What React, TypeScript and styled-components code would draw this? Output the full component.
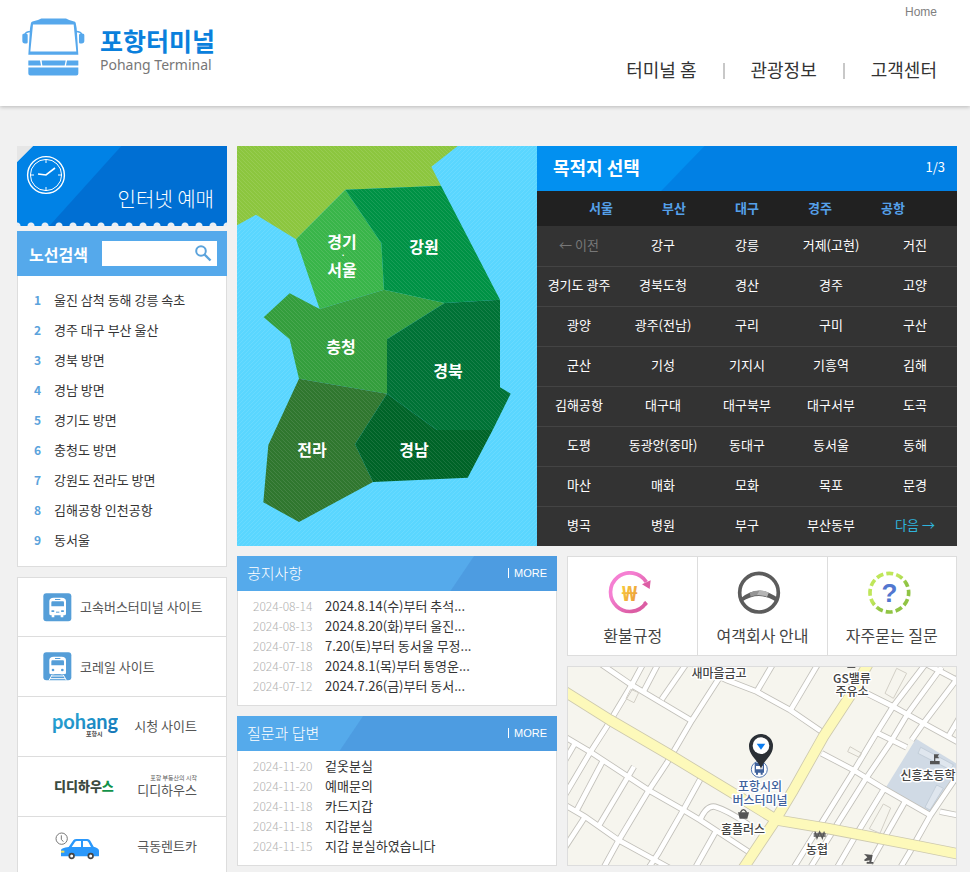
import React from "react";
import styled, { createGlobalStyle } from "styled-components";

const GlobalStyle = createGlobalStyle`
  *, *::before, *::after { box-sizing: border-box; }
  html { scrollbar-width: none; }
  body {
    margin: 0;
    background: #f1f1f1;
    color: #333;
    font-family: "Noto Sans CJK KR", "Noto Sans", sans-serif;
    font-size: 13px;
    line-height: 20px;
  }
  ul, ol { list-style: none; margin: 0; padding: 0; }
  h2 { margin: 0; }
  a { color: inherit; text-decoration: none; }
  button { font: inherit; color: inherit; background: none; border: 0; padding: 0; cursor: pointer; }
  svg { display: block; flex: none; }
`;

/* ---------- header ---------- */

const Header = styled.header`
  display: flex;
  justify-content: space-between;
  height: 106px;
  padding: 0 33px 0 22px;
  background: #fff;
  box-shadow: 0 1px 4px rgba(0, 0, 0, 0.24);
`;

const Brand = styled.a`
  display: flex;
  align-items: flex-start;
  gap: 15px;
  padding-top: 18px;
`;

const BrandText = styled.span`
  display: flex;
  flex-direction: column;
  padding-top: 7px;
`;

const BrandName = styled.strong`
  color: #0a80dc;
  font-size: 25px;
  line-height: 30px;
`;

const BrandSub = styled.span`
  color: #777;
  font-family: "Noto Sans", sans-serif;
  font-size: 14px;
  line-height: 20px;
`;

const HeaderRight = styled.div`
  display: flex;
  flex-direction: column;
  align-items: flex-end;
  gap: 35px;
  padding-top: 2px;
`;

const HomeLink = styled.a`
  color: #808080;
  font-family: "Liberation Sans", sans-serif;
  font-size: 12px;
`;

const MainNav = styled.nav`
  display: flex;
  align-items: center;
  font-size: 18px;
  line-height: 24px;

  a + a::before {
    content: "";
    display: inline-block;
    width: 2px;
    height: 16px;
    margin: 0 26px;
    background: #c8c8c8;
    vertical-align: -2px;
  }
`;

/* ---------- page grid ---------- */

const Page = styled.main`
  display: grid;
  grid-template-columns: 210px minmax(0, 1fr);
  gap: 10px;
  padding: 40px 13px 0 17px;
`;

const Content = styled.div`
  display: flex;
  flex-direction: column;
  gap: 10px;
`;

const Booking = styled.section`
  display: grid;
  grid-template-columns: 300px minmax(0, 1fr);
`;

const Lower = styled.div`
  display: grid;
  grid-template-columns: 320px minmax(0, 1fr);
  gap: 10px;
`;

const Stack = styled.div`
  display: flex;
  flex-direction: column;
  gap: 10px;
`;

/* ---------- sidebar ---------- */

const Ticket = styled.a`
  display: flex;
  justify-content: space-between;
  height: 80px;
  padding: 9px 13px 0 9px;
  color: #fff;
  font-size: 20px;
  font-weight: 300;
  line-height: 30px;
  background:
    radial-gradient(circle at 7px 4px, #e8eef4 3px, transparent 4px) -7px 100% / 14px 4px repeat-x,
    linear-gradient(135deg, #e6e6e6 11px, transparent 12px),
    linear-gradient(132deg, #0082e6 77px, #006fd3 78px);

  span { align-self: flex-end; padding-bottom: 12px; }
`;

const SearchBar = styled.form`
  display: flex;
  align-items: center;
  gap: 14px;
  height: 45px;
  margin-top: 5px;
  padding: 0 10px 0 12px;
  background: #55a9eb;

  label { flex: none; color: #fff; font-size: 16px; font-weight: 700; }
`;

const SearchBox = styled.div`
  display: flex;
  align-items: center;
  flex: 1;
  min-width: 0;
  height: 25px;
  padding-right: 5px;
  background: #fff;

  input { flex: 1; min-width: 0; height: 25px; padding: 0 6px; border: 0; outline: 0; background: transparent; font: inherit; }
`;

const RouteList = styled.ol`
  padding: 9px 0 11px;
  background: #fff;
  border: 1px solid #ddd;
  border-top: 0;

  a { display: flex; align-items: center; height: 30px; padding-left: 16px; }
  b { width: 20px; color: #5ba3dc; font-size: 12px; }
`;

const PartnerList = styled.ul`
  margin-top: 10px;
  background: #fff;
  border: 1px solid #ddd;
  border-bottom: 0;

  li:first-child > a { height: 59px; }
`;

const Partner = styled.a<{ $spread?: boolean }>`
  display: flex;
  align-items: center;
  justify-content: ${(p) => (p.$spread ? "space-between" : "flex-start")};
  gap: 8px;
  height: 60px;
  padding: ${(p) => (p.$spread ? "0 29px 2px 34px" : "0 0 0 25px")};
  border-bottom: 1px solid #ddd;
  color: #555;
`;

const PartnerName = styled.span`
  display: flex;
  flex-direction: column;
  align-items: flex-end;
  line-height: 16px;

  small { font-size: 6px; line-height: 8px; }
`;

/* ---------- destinations ---------- */

const Destinations = styled.div`
  background: #333;
  color: #fff;
`;

const DestHeader = styled.div`
  display: flex;
  align-items: center;
  justify-content: space-between;
  height: 45px;
  padding: 0 12px 3px 16px;
  background: linear-gradient(134deg, #0290f0 120px, #0180e4 121px);

  h2 { font-size: 18px; line-height: 26px; }
`;

const CityTabs = styled.div`
  display: flex;
  justify-content: center;
  height: 35px;
  padding-bottom: 2px;
  background: #212121;

  button { width: 73px; color: #55a0ea; font-weight: 700; }
`;

const StopGrid = styled.div`
  display: grid;
  grid-template-columns: repeat(5, minmax(0, 1fr));
`;

const Stop = styled.button<{ $tone?: "muted" | "accent" }>`
  height: 40px;
  padding-bottom: 3px;
  border-top: 1px solid #444;
  color: ${(p) => (p.$tone === "muted" ? "#777" : p.$tone === "accent" ? "#2fb4dc" : "#fff")};
  white-space: nowrap;

  &:nth-child(-n + 5) { border-top-color: #333; }
`;

/* ---------- boards ---------- */

const Board = styled.section`
  height: 150px;
  background: #fff;
  border: 1px solid #ddd;
  border-top: 0;
`;

const BoardHeader = styled.div<{ $cut: number }>`
  display: flex;
  align-items: center;
  justify-content: space-between;
  height: 35px;
  margin: 0 -1px;
  padding: 0 10px 2px;
  color: #fff;
  background: linear-gradient(124deg, #55aaeb ${(p) => p.$cut}px, #4d9ce1 ${(p) => p.$cut + 1}px);

  h2 { font-size: 15px; font-weight: 300; }
  a { padding-left: 5px; border-left: 1px solid #fff; font-family: "Liberation Sans", sans-serif; font-size: 11px; line-height: 10px; }
`;

const PostList = styled.ul`
  padding: 5px 0 9px 15px;

  li { display: flex; height: 20px; }
  time { width: 72px; color: #b0b0b0; font-size: 12px; font-weight: 300; }
`;

/* ---------- info cards ---------- */

const InfoCards = styled.nav`
  display: grid;
  grid-template-columns: repeat(3, minmax(0, 1fr));
  height: 100px;
  background: #fff;
  border: 1px solid #ddd;

  a {
    display: flex;
    flex-direction: column;
    align-items: center;
    gap: 8px;
    padding-top: 14px;
    color: #444;
    font-size: 16px;
    line-height: 24px;
  }
  a + a { border-left: 1px solid #ddd; }
  svg { margin-right: 6px; }
`;

const MapFrame = styled.div`
  height: 200px;
  border: 1px solid #ddd;

  svg { width: 100%; height: 100%; }
`;

/* ---------- drawings ---------- */

const BusLogo = () => (
  <svg width="63" height="58" viewBox="68 56 189 173" aria-hidden="true">
    <g fill="#56a8ec">
      <path fillRule="evenodd" d="M95 70 Q97 66 102 65 Q118 62 126 57 H200 Q208 62 222 65 Q228 66 229 70 L232 86 L237 166 H87 L92 86Z M101 75 L93 156 H231 L223 75Z" />
      <path d="M69 107 q0-4 4-4 h8 q4 0 4 4 v21 q0 4-4 4 h-4 q-8 0-8-8z M255 107 q0-4-4-4 h-8 q-4 0-4 4 v21 q0 4 4 4 h4 q8 0 8-8z" />
      <path d="M87 183 H122 L125 198 H87Z M127 183 H199 L196 198 H129Z M203 183 H237 V198 H200Z M87 204 H237 V222 q0 6-6 6 H93 q-6 0-6-6z" />
    </g>
    <path d="M76 106 Q79 96 94 96 M248 106 Q245 96 230 96" fill="none" stroke="#56a8ec" strokeWidth="5" />
  </svg>
);

const ClockIcon = () => (
  <svg width="40" height="40" viewBox="0 0 40 40" fill="none" stroke="#fff" aria-hidden="true">
    <circle cx="20" cy="20" r="18.4" strokeWidth="1.4" />
    <circle cx="20" cy="20" r="15.6" strokeWidth="1" />
    <path d="M20 5v3M20 32v3M5 20h3M32 20h3" strokeWidth="1" />
    <path d="M12 19l8 1 9-7" strokeWidth="1.6" />
  </svg>
);

const SearchIcon = () => (
  <svg width="17" height="17" viewBox="0 0 17 17" fill="none" stroke="#5ba3dc" aria-hidden="true">
    <circle cx="6" cy="6" r="4.8" strokeWidth="2" />
    <path d="M9.5 9.5l6 6" strokeWidth="2.4" />
  </svg>
);

const VehicleIcon = ({ rail }: { rail?: boolean }) => (
  <svg width="29" height="29" viewBox="0 0 87 87" aria-hidden="true">
    <rect x="1" y="1" width="84" height="84" rx="9" fill="#559ed8" />
    <path fill="#fff" fillRule="evenodd" d="M19 25 q0-11 13-11 h24 q13 0 13 11 v37 q0 5-5 5 h-3 v6 h-8 v-6 H34 v6 h-8 v-6 h-2 q-5 0-5-5z M28 25 q-3 0-3 4 v11 h38 V29 q0-4-3-4z M36 18 v3 h16 v-3z" />
    {rail ? (
      <g>
        <circle cx="30" cy="54" r="4" fill="#559ed8" />
        <circle cx="58" cy="54" r="4" fill="#559ed8" />
        <path d="M19 67 h50 v8 H19z" fill="#559ed8" />
        <path d="M27 69 L18 85 M61 69 L70 85 M26 72 H62 M21 80 H67" stroke="#fff" strokeWidth="3" fill="none" />
      </g>
    ) : (
      <g fill="#559ed8">
        <rect x="25" y="52" width="9" height="5" rx="2" />
        <rect x="54" y="52" width="9" height="5" rx="2" />
        <rect x="39" y="56" width="10" height="3" />
      </g>
    )}
  </svg>
);

const PohangLogo = () => (
  <svg width="66" height="28" viewBox="0 0 66 28" aria-label="pohang 포항시">
    <defs>
      <linearGradient id="pohang" x1="0" y1="0" x2="1" y2="1">
        <stop offset="0" stopColor="#2fb3dd" />
        <stop offset="1" stopColor="#1473b5" />
      </linearGradient>
    </defs>
    <text x="0" y="17" fontFamily="Lato, sans-serif" fontWeight="700" fontSize="20" fill="url(#pohang)">pohang</text>
    <text x="34" y="24" fontSize="6" fontWeight="700" fill="#444" stroke="#fff" strokeWidth="2" paintOrder="stroke">포항시</text>
  </svg>
);

const DidiLogo = () => (
  <svg width="64" height="20" viewBox="0 0 64 20" aria-label="디디하우스">
    <text x="2" y="15" fontSize="13" fontWeight="900" fill="#3b4a40">디디하우<tspan fill="#13924a">스</tspan></text>
  </svg>
);

const CarLogo = () => (
  <svg width="49" height="28" viewBox="156 818 147 84" aria-hidden="true">
    <circle cx="185" cy="838" r="17" fill="#fff" stroke="#777" strokeWidth="3" />
    <path d="M184 828 V840 L190 847" fill="none" stroke="#777" strokeWidth="3" />
    <path fill="#2a98fb" fillRule="evenodd" d="M183 872 Q184 866 206 863 L220 843 Q223 839 230 839 H262 Q268 839 271 844 L281 862 Q297 866 297 874 V889 Q297 891 293 891 H183Z M215 863 H243 V845 H231 Q227 845 225 848Z M249 863 H273 L265 848 Q263 845 260 845 H249Z" />
    <path d="M183 874 h10 v6 h-10z" fill="#f3dd58" />
    {[215, 272].map((x) => (
      <circle key={x} cx={x} cy="890" r="7" fill="#fff" stroke="#444" strokeWidth="5" />
    ))}
  </svg>
);

const RefundIcon = () => (
  <svg width="44" height="44" viewBox="142 64 132 132" aria-hidden="true">
    <defs>
      <linearGradient id="pink" x1="0" y1="0" x2="1" y2="1">
        <stop offset="0.3" stopColor="#f57fd2" />
        <stop offset="0.8" stopColor="#dc5da4" />
      </linearGradient>
      <linearGradient id="gold" x1="0" y1="0" x2="1" y2="1">
        <stop offset="0" stopColor="#fbd33c" />
        <stop offset="1" stopColor="#e8923c" />
      </linearGradient>
    </defs>
    <path d="M257 97 A58 58 0 1 0 255 161" fill="none" stroke="url(#pink)" strokeWidth="11" />
    <path d="M244 104 L270 92 L267 118Z M248 158 L254 154 L262 163 L256 168Z" fill="#dc5da4" />
    <text x="207" y="153" textAnchor="middle" fontFamily="Noto Sans, sans-serif" fontSize="62" fontWeight="800" fill="url(#gold)">₩</text>
  </svg>
);

const WheelIcon = () => (
  <svg width="44" height="44" viewBox="532 64 132 132" aria-hidden="true">
    <path d="M541 147 Q598 100 657 147 L650 156 Q598 122 546 156Z" fill="#5c5c5c" />
    <path d="M570 129 Q598 116 627 129 L622 141 Q598 133 573 141Z" fill="#949494" />
    <path d="M600 122 Q614 123 627 129 L622 141 Q606 135 592 136Z" fill="#b5b5b5" />
    <circle cx="598" cy="129" r="58" fill="none" stroke="#5c5c5c" strokeWidth="11" />
  </svg>
);

const FaqIcon = () => (
  <svg width="44" height="44" viewBox="922 64 132 132" aria-hidden="true">
    <defs>
      <linearGradient id="lime" x1="0" y1="0" x2="1" y2="1">
        <stop offset="0.4" stopColor="#bfe65a" />
        <stop offset="0.6" stopColor="#90c444" />
      </linearGradient>
    </defs>
    <circle cx="989" cy="129" r="58" fill="none" stroke="url(#lime)" strokeWidth="11" pathLength="120" strokeDasharray="7 3" strokeDashoffset="3.5" />
    <text x="989" y="157" textAnchor="middle" fontFamily="Liberation Sans, sans-serif" fontSize="78" fontWeight="700" fill="#5277cf">?</text>
  </svg>
);

/* Outlines are drawn on a 900 x 1200 canvas and scaled to the 300 x 400 panel. */
const regions = [
  { fill: "#8cc63f", d: "M0 0 H662 L583 62 L612 119 L325 131 L177 280 L57 206 L0 238Z" },
  { fill: "#39b54a", d: "M325 131 L433 291 L441 431 L248 489 L177 280Z" },
  { fill: "#009245", d: "M325 131 L612 119 L789 461 L623 471 L441 431 L433 291Z" },
  { fill: "#349e3d", d: "M441 431 L623 471 L450 580 V743 L186 698 L158 580 L80 514 L158 442 L248 489Z" },
  { fill: "#007236", d: "M623 471 L789 461 V724 L821 743 L767 852 H600 L450 743 V580Z" },
  { fill: "#30772f", d: "M186 698 L450 743 L354 895 L408 1008 L186 1128 L79 1069 L94 897Z" },
  { fill: "#006428", d: "M450 743 L600 852 H767 L692 995 L408 1008 L354 895Z" },
];

const regionNames = [
  { name: "경기", x: 105, y: 102 },
  { name: "서울", x: 105, y: 130 },
  { name: "강원", x: 187, y: 107 },
  { name: "충청", x: 104, y: 207 },
  { name: "경북", x: 211, y: 231 },
  { name: "전라", x: 75, y: 310 },
  { name: "경남", x: 177, y: 310 },
];

const RegionMap = () => (
  <svg width="300" height="400" viewBox="0 0 300 400" role="img" aria-label="지역 지도">
    <defs>
      <pattern id="sea" width="4" height="4" patternUnits="userSpaceOnUse">
        <path d="M-1 1l2-2M0 4l4-4M3 5l2-2" stroke="#fff" strokeOpacity="0.09" />
      </pattern>
      <pattern id="land" width="12" height="12" patternUnits="userSpaceOnUse">
        <path d="M-3 9l6 6M0 0l12 12M9-3l6 6" stroke="#fff" strokeOpacity="0.14" strokeWidth="3" />
      </pattern>
    </defs>
    <rect width="300" height="400" fill="#5ad6ff" />
    <rect width="300" height="400" fill="url(#sea)" />
    <g transform="scale(0.33333)">
      {regions.map((r) => (
        <g key={r.fill}>
          <path d={r.d} fill={r.fill} />
          <path d={r.d} fill="url(#land)" fillOpacity="0.7" />
        </g>
      ))}
    </g>
    <g fill="#fff" fontSize="16" fontWeight="700" textAnchor="middle">
      {regionNames.map((r) => (
        <text key={r.name} x={r.x} y={r.y}>{r.name}</text>
      ))}
      <text x="106" y="112" fontSize="8">·</text>
    </g>
  </svg>
);

const streets = [
  "M120 10 L215 75 L395 182",
  "M250 10 L215 75 L140 200 L90 278 L0 430",
  "M480 50 L395 182 L320 310 L265 393 L175 543 L130 625",
  "M10 228 L90 275 L265 390 L370 450 L420 480 L565 575",
  "M10 432 L75 470 L175 540 L330 625",
  "M295 10 L252 92",
  "M380 10 L305 118",
  "M395 10 L500 60 L590 95 L690 150 L785 215",
  "M640 10 L590 95",
  "M775 10 L692 150",
  "M850 50 L910 95 L1000 140 L1090 190 L1200 250",
  "M1098 10 L1000 138 L950 218 L880 335 L790 480 L700 625",
  "M1145 21 L1045 158 L990 250 L915 360 L830 495 L750 625",
  "M1200 45 L1090 190 L1055 240",
  "M975 382 L885 530 L830 625",
  "M1200 170 L1165 230",
  "M1095 10 L1200 65",
  "M785 280 L880 330 L970 385 L1115 468",
  "M950 218 L1040 262",
  "M1200 335 L1110 468 L1050 575 L1020 625",
  "M1140 455 L1200 467",
  "M425 350 L370 450 L295 580 L265 625",
  "M420 480 Q440 435 465 440 Q500 450 560 490 L590 520",
  "M467 515 L405 625",
  "M48 245 L10 310",
  "M130 300 L48 455",
  "M222 320 L115 500",
  "M75 470 L10 570",
  "M1035 425 L930 610",
];
const avenues = [
  "M10 92 L150 180 L330 285 L520 400 L650 480 L800 505 L1060 555 L1200 583",
  "M925 10 L875 100 L790 230 L700 390 L640 490 L550 625",
];

const places = [
  { name: "새마을금고", x: 151, y: 11 },
  { name: "GS밸류", x: 284, y: 16 },
  { name: "주유소", x: 284, y: 29 },
  { name: "홈플러스", x: 175, y: 167 },
  { name: "농협", x: 249, y: 187 },
  { name: "신흥초등학", x: 360, y: 113 },
  { name: "포항시외", x: 192, y: 124, fill: "#41639c" },
  { name: "버스터미널", x: 192, y: 138, fill: "#41639c" },
];

const StreetMap = () => (
  <svg viewBox="0 0 388 198" preserveAspectRatio="xMidYMid slice" role="img" aria-label="포항시외버스터미널 약도">
    <rect width="388" height="198" fill="#f6f5ee" />
    <g transform="scale(0.33333) translate(-24 -21)" fill="none">
      <path d="M1068 236 L1188 310 V370 L1110 460 L978 382Z" fill="#d0dae5" />
      <path d="M1082 262 L1180 314 L1172 330 L1074 280Z M1130 375 L1150 385 L1110 450 L1095 442Z" fill="#dfe6ee" stroke="#b8c4d0" strokeWidth="2" />
      {[["#c2c0ba", 19], ["#fff", 14]].map(([color, width]) => (
        <g key={color} stroke={String(color)} strokeWidth={width}>
          {streets.map((d) => <path key={d} d={d} />)}
        </g>
      ))}
      {[["#cdc9ae", 34], ["#fdf9ba", 29]].map(([color, width]) => (
        <g key={color} stroke={String(color)} strokeWidth={width} strokeLinejoin="round">
          {avenues.map((d) => <path key={d} d={d} />)}
        </g>
      ))}
      <path d="M1010 25 L1040 40 L1000 115 L975 100Z M870 260 L905 280 L898 292 L863 275Z M212 88 L236 98 L222 128 L198 116Z M970 432 L992 444 L960 520 L928 506Z" stroke="#d2cfc6" strokeWidth="3" />
      <circle cx="598" cy="328" r="24" fill="#fff" stroke="#4f74b0" strokeWidth="3" />
      <path fillRule="evenodd" d="M584 312 q0-4 4-4 h20 q4 0 4 4 v26 h-4 v6 h-6 v-6 h-8 v6 h-6 v-6 h-4z M588 318 v10 h20 v-10z" fill="#41639c" />
      <path d="M603 328 C597 300 567 290 567 258 a36 36 0 0 1 72 0 C639 290 609 300 603 328Z" fill="#2b3036" />
      <circle cx="603" cy="257" r="25" fill="#fff" />
      <path d="M590 251 H616 L603 269Z" fill="#0a7cf0" />
      <g fill="#555">
        <path d="M534 457 H567 L562 476 H539Z" />
        <path d="M1110 303 h29 v10 h-29z M1122 303 V283 h16 l-5 6 5 6 h-12 v8z" />
        <path d="M912 582 L938 585 L934 606 h6 v5 h-20 v-5 h8 v-6 Q914 606 912 600 L922 592Z M862 18 h24 v6 h-24z" />
      </g>
      <path d="M541 458 Q550 440 560 458" stroke="#555" strokeWidth="4" />
      <path d="M765 515 L771 534 L779 516 L787 534 L793 515 M761 522 H797 M761 528 H797" stroke="#555" strokeWidth="4" />
    </g>
    <g fontSize="12" fontWeight="500" textAnchor="middle" stroke="#fff" strokeWidth="3" strokeLinejoin="round" paintOrder="stroke">
      {places.map((p) => (
        <text key={p.name} x={p.x} y={p.y} fill={p.fill ?? "#444"}>{p.name}</text>
      ))}
    </g>
  </svg>
);

/* ---------- data ---------- */

const routes = [
  "울진 삼척 동해 강릉 속초", "경주 대구 부산 울산", "경북 방면", "경남 방면", "경기도 방면",
  "충청도 방면", "강원도 전라도 방면", "김해공항 인천공항", "동서울",
];
const cities = ["서울", "부산", "대구", "경주", "공항"];
const stops = [
  "← 이전", "강구", "강릉", "거제(고현)", "거진",
  "경기도 광주", "경북도청", "경산", "경주", "고양",
  "광양", "광주(전남)", "구리", "구미", "구산",
  "군산", "기성", "기지시", "기흥역", "김해",
  "김해공항", "대구대", "대구북부", "대구서부", "도곡",
  "도평", "동광양(중마)", "동대구", "동서울", "동해",
  "마산", "매화", "모화", "목포", "문경",
  "병곡", "병원", "부구", "부산동부", "다음 →",
];
const notices = [
  ["2024-08-14", "2024.8.14(수)부터 추석..."],
  ["2024-08-13", "2024.8.20(화)부터 울진..."],
  ["2024-07-18", "7.20(토)부터 동서울 무정..."],
  ["2024-07-18", "2024.8.1(목)부터 통영운..."],
  ["2024-07-12", "2024.7.26(금)부터 동서..."],
];
const questions = [
  ["2024-11-20", "겉옷분실"],
  ["2024-11-20", "예매문의"],
  ["2024-11-18", "카드지갑"],
  ["2024-11-18", "지갑분실"],
  ["2024-11-15", "지갑 분실하였습니다"],
];

const PostBoard = ({ title, cut, posts }: { title: string; cut: number; posts: string[][] }) => (
  <Board>
    <BoardHeader $cut={cut}>
      <h2>{title}</h2>
      <a href="#">MORE</a>
    </BoardHeader>
    <PostList>
      {posts.map(([date, text]) => (
        <li key={text}>
          <time dateTime={date}>{date}</time>
          <a href="#">{text}</a>
        </li>
      ))}
    </PostList>
  </Board>
);

export default function App() {
  return (
    <>
      <GlobalStyle />
      <Header>
        <Brand href="#">
          <BusLogo />
          <BrandText>
            <BrandName>포항터미널</BrandName>
            <BrandSub>Pohang Terminal</BrandSub>
          </BrandText>
        </Brand>
        <HeaderRight>
          <HomeLink href="#">Home</HomeLink>
          <MainNav>
            <a href="#">터미널 홈</a>
            <a href="#">관광정보</a>
            <a href="#">고객센터</a>
          </MainNav>
        </HeaderRight>
      </Header>
      <Page>
        <aside>
          <Ticket href="#">
            <ClockIcon />
            <span>인터넷 예매</span>
          </Ticket>
          <SearchBar onSubmit={(e) => e.preventDefault()}>
            <label htmlFor="route">노선검색</label>
            <SearchBox>
              <input id="route" type="text" />
              <button type="submit" aria-label="검색"><SearchIcon /></button>
            </SearchBox>
          </SearchBar>
          <RouteList>
            {routes.map((route, i) => (
              <li key={route}><a href="#"><b>{i + 1}</b>{route}</a></li>
            ))}
          </RouteList>
          <PartnerList>
            <li><Partner href="#"><VehicleIcon />고속버스터미널 사이트</Partner></li>
            <li><Partner href="#"><VehicleIcon rail />코레일 사이트</Partner></li>
            <li><Partner href="#" $spread><PohangLogo /><PartnerName>시청 사이트</PartnerName></Partner></li>
            <li><Partner href="#" $spread><DidiLogo /><PartnerName><small>포항 부동산의 시작</small>디디하우스</PartnerName></Partner></li>
            <li><Partner href="#" $spread><CarLogo /><PartnerName>극동렌트카</PartnerName></Partner></li>
          </PartnerList>
        </aside>
        <Content>
          <Booking>
            <RegionMap />
            <Destinations>
              <DestHeader>
                <h2>목적지 선택</h2>
                <span>1/3</span>
              </DestHeader>
              <CityTabs>
                {cities.map((city) => <button key={city} type="button">{city}</button>)}
              </CityTabs>
              <StopGrid>
                {stops.map((stop, i) => (
                  <Stop key={stop} type="button" $tone={i === 0 ? "muted" : i === stops.length - 1 ? "accent" : undefined}>{stop}</Stop>
                ))}
              </StopGrid>
            </Destinations>
          </Booking>
          <Lower>
            <Stack>
              <PostBoard title="공지사항" cut={196} posts={notices} />
              <PostBoard title="질문과 답변" cut={104} posts={questions} />
            </Stack>
            <Stack>
              <InfoCards>
                <a href="#"><RefundIcon />환불규정</a>
                <a href="#"><WheelIcon />여객회사 안내</a>
                <a href="#"><FaqIcon />자주묻는 질문</a>
              </InfoCards>
              <MapFrame><StreetMap /></MapFrame>
            </Stack>
          </Lower>
        </Content>
      </Page>
    </>
  );
}
